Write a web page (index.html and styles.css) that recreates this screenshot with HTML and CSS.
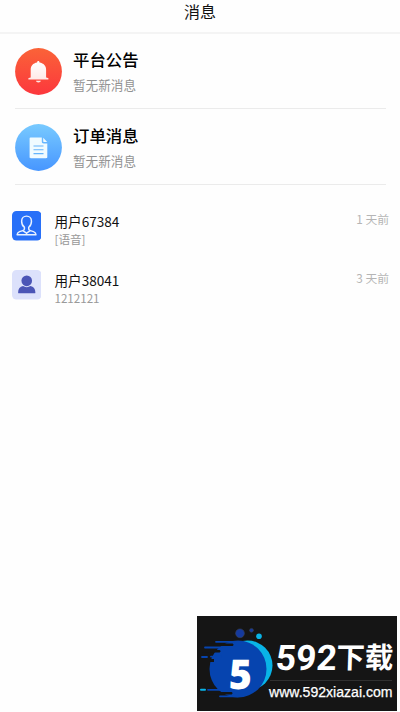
FILE: index.html
```html
<!DOCTYPE html>
<html lang="zh-CN">
<head>
<meta charset="utf-8">
<title>消息</title>
<link rel="stylesheet" href="styles.css">
</head>
<body>
<header class="bar">消息</header>
<main>
  <section class="notices">
    <div class="notice">
      <svg class="disc" viewBox="0 0 47 47">
        <defs>
          <linearGradient id="red" x1="0" y1="0" x2="0" y2="1"><stop offset="0" stop-color="#fa6338"/><stop offset="1" stop-color="#fc373d"/></linearGradient>
          <linearGradient id="bell" x1="0" y1="0" x2="0" y2="1"><stop offset="0" stop-color="#fff"/><stop offset="1" stop-color="#ffe6e4"/></linearGradient>
        </defs>
        <circle cx="23.5" cy="23.5" r="23.4" fill="url(#red)"/>
        <path fill="url(#bell)" d="M23.3 13c.8 0 1.200.6 1.200 1.600 4.200.7 6.600 3.400 6.600 7.200v7.600l1.900.5c.7.2.7 1.700-.2 1.700H14c-.9 0-.9-1.500-.2-1.700l1.900-.5v-7.600c0-3.800 2.200-6.500 6.400-7.200 0-1 .4-1.600 1.200-1.600zM21 32.700h4.900c-.3 1.200-1.200 1.700-2.500 1.700s-2.200-.5-2.400-1.700z"/>
      </svg>
      <div>
        <h2 class="notice-title">平台公告</h2>
        <p class="notice-text">暂无新消息</p>
      </div>
    </div>
    <div class="notice">
      <svg class="disc" viewBox="0 0 47 47">
        <defs><linearGradient id="blue" x1="0" y1="0" x2="0" y2="1"><stop offset="0" stop-color="#78caff"/><stop offset="1" stop-color="#4796ff"/></linearGradient></defs>
        <circle cx="23.5" cy="23.5" r="23.4" fill="url(#blue)"/>
        <path fill="#f0fbff" d="M15.500 13.500h11.300v4c0 1.300.6 1.900 1.900 1.900h3.600v13.700c0 .8-.4 1.200-1.200 1.200H15.800c-.8 0-1.200-.4-1.200-1.200V14.400c0-.6.300-.9.900-.9zM28.200 13.800l4 4.300h-3c-.7 0-1-.3-1-1z"/>
        <path stroke="#64b4fb" stroke-width="1.100" d="M18.500 22h10M18.500 25.800h10M18.500 29.600h10"/>
      </svg>
      <div>
        <h2 class="notice-title">订单消息</h2>
        <p class="notice-text">暂无新消息</p>
      </div>
    </div>
  </section>
  <section class="chats">
    <div class="chat">
      <svg class="avatar" viewBox="0 0 30 30">
        <rect width="30" height="30" rx="4.500" fill="#2870f8"/>
        <path fill="none" stroke="#e8f1ff" stroke-width="1.500" stroke-linejoin="round" d="M12.600 16.500C10.500 15 9.800 12.500 9.800 10.300 9.800 7.200 12 5.200 14.800 5.200s5 2 5 5.100c0 2.200-.8 4.700-2.800 6.200v1.800c0 1 .7 1.400 1.700 1.700l3.200 1c1.500.5 2.400 1.500 2.500 3.200H5.200c.1-1.700 1-2.700 2.500-3.200l3.200-1c1-.3 1.700-.7 1.700-1.700zM11 20l3.800 2.500 3.800-2.500M14.800 22.500V24"/>
      </svg>
      <div class="chat-body">
        <p class="name">用户67384</p>
        <p class="preview">[语音]</p>
      </div>
      <time class="time">1 天前</time>
    </div>
    <div class="chat">
      <svg class="avatar" viewBox="0 0 30 30">
        <rect width="30" height="30" rx="4.500" fill="#dce1fb"/>
        <circle cx="15" cy="11" r="5.400" fill="#4b55b6"/>
        <path fill="#4b55b6" d="M6.200 22.800c0-3.600 2-6 5-6.500 2.200 1.500 5.400 1.500 7.600 0 3 .5 5 2.900 5 6.500 0 .6-.3.900-.9.900H7.100c-.6 0-.9-.3-.9-.9z"/>
      </svg>
      <div class="chat-body">
        <p class="name">用户38041</p>
        <p class="preview">1212121</p>
      </div>
      <time class="time">3 天前</time>
    </div>
  </section>
</main>
<aside class="badge">
  <svg width="200" height="95" viewBox="0 0 200 95">
    <circle cx="50.500" cy="49.500" r="25" fill="#09b4e7"/>
    <circle cx="41" cy="53" r="28.500" fill="#0644af"/>
    <path fill="#151515" d="M8 27.500h27c2 0 2 2.500 0 2.500H8zM5 34h17c2 0 2 2.500 0 2.500H5zM3 43h14v3H3zM6 76h28c2 0 2 2.500 0 2.500H6z"/>
    <path stroke="#0644af" stroke-width="1.800" stroke-linecap="round" d="M19 25.800h18M8 31.500h17M14 40.600h10M5 41h5M11 73.800h23M23 80.300h18"/>
    <path d="M4 73.800h4" stroke="#09b4e7" stroke-width="2" stroke-linecap="round"/>
    <g stroke="#3b4252" stroke-width=".6"><circle cx="43" cy="17.300" r="4.400" fill="#153a9e"/><circle cx="54.500" cy="14.300" r="1.900" fill="#153a9e"/></g>
    <circle cx="62" cy="20.300" r="2.800" fill="#09b4e7"/>
    <text class="mark" transform="translate(31.500 72.500) skewX(-2)" textLength="23" lengthAdjust="spacingAndGlyphs">5</text>
    <text class="brand" transform="translate(78 54) skewX(-4)" textLength="61" lengthAdjust="spacingAndGlyphs">592</text>
    <text class="brand-cn" transform="translate(139 51.500) skewX(-2)" textLength="57" lengthAdjust="spacingAndGlyphs">下载</text>
    <path d="M73 64.500h122" stroke="#303030"/>
    <text class="site" x="72" y="81" textLength="123.500" lengthAdjust="spacingAndGlyphs">www.592xiazai.com</text>
  </svg>
</aside>
</body>
</html>
```
FILE: styles.css
```css
* { box-sizing: border-box; }
body {
  margin: 0;
  height: 712px;
  overflow: hidden;
  background: #fefefe;
  color: #111;
  font-family: "Noto Sans CJK SC", sans-serif;
}
h2, p { margin: 0; }
svg { display: block; flex: none; }
.bar {
  height: 34px;
  padding-bottom: 10px;
  border-bottom: 2px solid #f4f4f4;
  font-size: 16px;
  line-height: 22px;
  text-align: center;
}
.notices { padding: 0 14px 0 15px; }
.notice {
  display: flex;
  gap: 11.500px;
  height: 76px;
  padding-top: 15px;
  border-bottom: 1px solid #ebebeb;
}
.notice:first-child { height: 75px; padding-top: 14px; }
.disc { width: 47px; height: 47px; margin-left: -.500px; }
.notice-title {
  font-size: 16.400px;
  font-weight: 500;
  line-height: 22px;
  color: #000;
}
.notice-text {
  margin-top: 6px;
  font-size: 12.600px;
  line-height: 18px;
  color: #929292;
}
.chats { padding: 26px 11px 0 11.500px; }
.chat { display: flex; height: 59px; }
.avatar { width: 29.500px; height: 29.500px; }
.chat-body { flex: 1; padding: 1px 0 0 13.500px; }
.name { font-size: 13.600px; line-height: 19px; }
.preview { font-size: 11.600px; line-height: 16px; color: #999; }
.time { font-size: 11.800px; line-height: 16px; color: #b5b5b5; }
.badge {
  position: absolute;
  left: 197px;
  top: 616px;
  width: 200px;
  height: 95px;
  background: #151515;
}
.badge text { fill: #fff; }
.mark { font: 900 41px "Noto Sans", sans-serif; }
.brand { font: 700 35px "Roboto", sans-serif; }
.brand-cn { font: 700 29px "Noto Sans CJK SC", sans-serif; }
.site { font: 14px "Liberation Sans", sans-serif; stroke: #fff; stroke-width: .25px; }
```
